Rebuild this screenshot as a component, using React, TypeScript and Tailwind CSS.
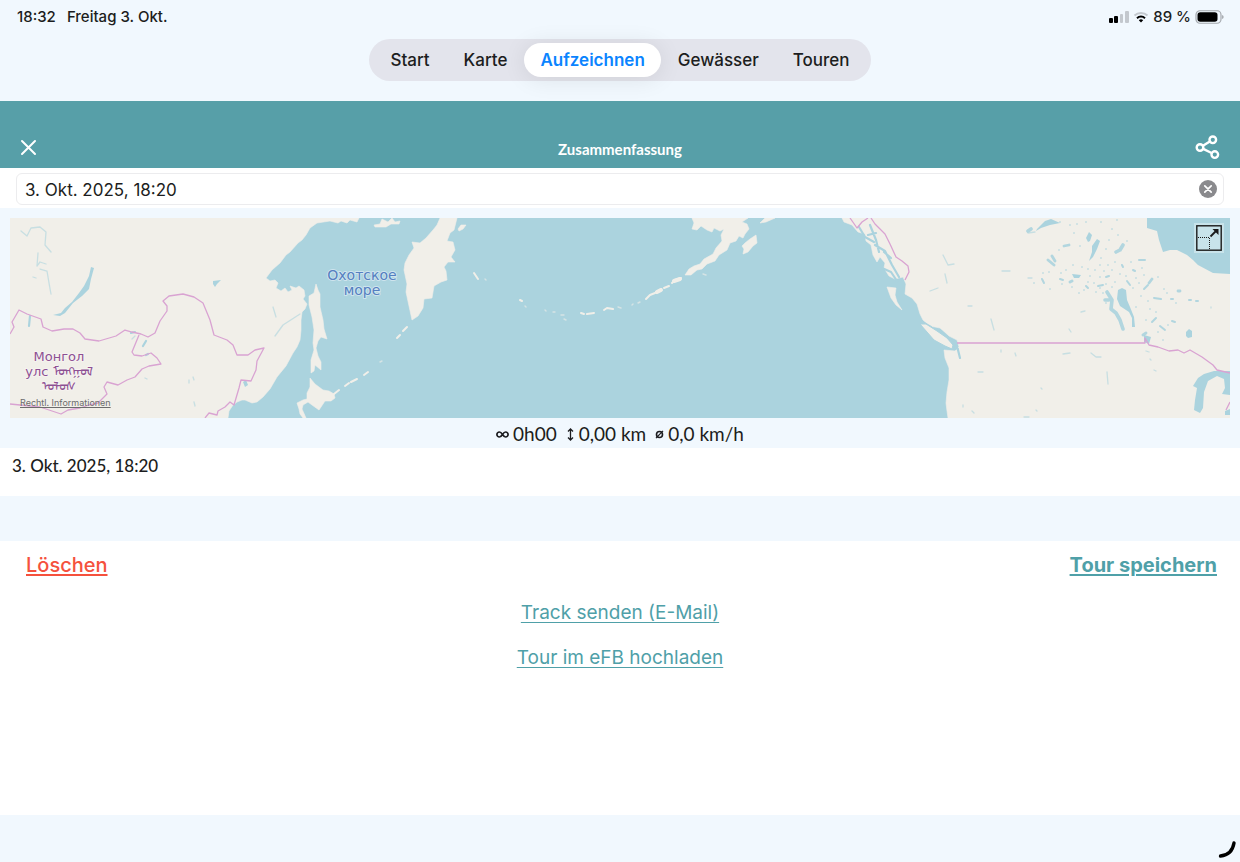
import { useState } from "react";

const TABS = ["Start", "Karte", "Aufzeichnen", "Gewässer", "Touren"];

const LAND = [
  // Siberia and Manchuria
  "M10 218H359L357 222L350 220L347 223L341 221L338 223L330 221L317 223L310 228L306 235L302 240L298 243L290 252L286 255L280 263L272 270L266 278L270 281L275 280L278 283L276 288L281 291L285 288L288 292L292 290L290 286L296 288L299 286L304 290L305 296L303 299L307 304L305 309L302 312L301 320L301 330L300 340L297 347L293 353L286 366L277 377L270 389L263 397L257 402L252 403L245 400L242 400L237 402L233 405L229 411L228 418H10Z",
  // Sakhalin
  "M316 284L318 290L320 294L320 307L323 320L324 329L327 339L321 337L318 341L316 348L318 356L321 362L321 370L315 365L314 371L311 373L311 360L314 350L313 343L314 330L312 317L309 305L309 296L314 293Z",
  // Hokkaido
  "M310 378L315 384L323 390L329 391L334 394L335 398L331 401L325 401L319 410L312 405L308 402L303 405L302 409L306 418H303L300 414L299 409L297 403L303 400L307 399L307 393L310 387Z",
  // Kamchatka
  "M440 218L437 225L433 230L426 238L420 243L412 242L414 248L409 255L405 263L404 270L407 284L406 292L409 306L412 320L418 316L423 308L424 299L432 298L434 286L441 282L447 280L446 271L444 267L448 262L455 262L451 257L455 250L453 242L447 241L450 233L454 230L457 218Z",
  "M374 225L380 224L382 219L388 222L392 218L395 222L400 221L399 224L391 224L386 227L375 227Z",
  "M458 229L461 225L466 225L463 229L459 231Z",
  // Alaska
  "M692 218L694 223L692 229L697 230L701 226L707 230L712 232L714 228L720 231L724 229L721 235L722 241L716 248L713 254L704 259L700 264L694 266L689 269L685 275L691 275L697 270L702 269L707 264L715 261L719 255L727 250L730 243L736 241L739 236L743 238L745 234L749 229L747 224L742 222L748 218Z",
  "M742 246L745 243L750 239L756 235L757 243L753 246L748 252L743 254L744 249Z",
  "M760 223L765 218H775L766 222Z",
  // North America
  "M842 218L844 222L852 225L858 232L865 234L866 241L871 245L873 255L877 262L880 257L885 263L884 268L889 276L895 279L903 277L906 284L905 294L912 298L917 304L920 314L923 320L930 326L940 328L949 336L957 340L959 347L955 351L944 350L945 358L949 368V380L947 392L946 403L947 411L948 418H1230V218Z",
  // Haida Gwaii
  "M887 287L896 288L895 295L897 302L902 310L896 305L891 298Z",
];

const ISLAND_CHAINS = [
  "M403 331L407 327M397 338L400 335M364 375L368 372M351 382L357 379M345 386L349 383M334 394L339 390M474 273L478 279",
  "M672 283L675 280L681 278M646 299L650 295L655 293M656 292L661 289M664 288L669 286M520 300L522 301M604 310L607 308L613 309M581 313L584 314M587 314L594 313",
];

const FAINT_ISLANDS =
  "M380 362L382 361M638 303L640 302M553 312H555M545 310L546 311M561 315H564M564 319L566 320M618 307L621 308M632 305L633 304M703 274L706 275M525 306L526 307M485 279L486 280";

const WATERS = [
  // Baikal
  "M91 267L94 268L91 279L89 289L82 296L73 303L65 313L60 316L53 315L61 313L65 308L72 302L79 293L84 286L89 276Z",
  // Hudson Bay
  "M1147 218V228L1157 231L1159 240L1163 252L1170 250L1177 250L1187 255L1193 260L1198 265L1213 273L1230 274V218Z",
  // Michigan, the edge of Superior and Huron
  "M1193 386L1198 378L1204 374L1214 371H1230V395L1222 394L1225 388L1224 379L1217 376L1208 381L1204 392L1203 408L1200 413L1194 410L1195 400L1197 388Z",
  "M1225 411L1230 409V415H1225Z",
  // Winnipeg
  "M1118 290L1122 288L1126 290L1127 300L1130 307L1134 317L1135 327L1132 327L1132 318L1129 312L1120 306L1117 299Z",
  "M1186 332L1189 329L1192 331V337L1188 338L1186 336Z",
  "M1089 232L1092 235L1090 241L1088 242L1086 238Z",
  "M1097 239L1100 241L1097 249L1093 257L1089 261L1092 252L1092 246Z",
  "M1037 229L1045 221L1051 219L1060 223L1050 225L1041 228L1036 231Z",
  "M1144 335L1151 337L1149 344L1144 342Z",
  "M213 281L221 280L217 284L215 287L213 284Z",
  "M246 380L248 385L245 387L243 382Z",
  "M1072 274L1081 275L1079 278H1074Z",
];

const LAKE_STROKES = [
  "M1107 292L1112 300L1111 309L1116 313L1120 320L1123 329M1105 300H1109M1116 252L1120 250L1123 245M1028 231L1031 229",
  "M1048 260L1054 265M1052 256L1055 261M1064 246L1069 245M1070 282L1072 281M1149 283L1152 279M1178 291H1180M1143 335L1146 333",
  "M1044 283L1042 279M1060 279L1063 280M1106 277L1109 276M1086 286L1088 288M1133 270L1135 271M1152 322L1156 318M1160 326L1165 330M1172 321L1175 322M1154 298L1161 299M1171 299H1173M1189 300H1191M1196 301H1198M1130 285L1127 281M1139 260H1145M1122 265L1123 267M1098 286L1103 285M1144 289L1148 285",
  "M1063 354L1070 353M1091 353L1096 357L1101 357M1107 372L1108 384M1146 351L1149 352M1154 370L1156 371M1081 312L1085 311M1069 329L1071 332M1041 388L1042 389M1150 359L1151 360M1036 410L1037 411M1211 307V308",
  "M1028 233L1035 232M1002 271L1010 271M943 255L948 265L954 264M945 274L947 283M930 291L938 288M968 306H972M1015 353L1016 356M1001 350V352M972 411L974 413M1024 417H1029M963 405V407M978 372H983M991 319L994 330M1028 278H1032",
  "M21 231L27 236L31 228L40 227L46 232L45 245L51 252M38 253L37 266L40 262L46 264M40 269L47 271L49 283L51 294M132 339L135 336M194 402L195 406M193 377L194 380M189 380V383M33 277L36 278M275 336L283 325L300 314M273 307L276 317M145 378L147 379",
];

// small lakes of the Canadian Shield, drawn as dots
const LAKE_DOTS =
  "M1060 222h0M1070 225h0M1077 224h0M1086 222h0M1101 222h0M1117 220h0M1112 229h0M1118 235h0M1074 233h0M1109 240h0M1106 249h0M1127 241h0M1080 246h0M1059 250h0M1101 258h0M1115 262h0M1131 262h0M1108 265h0M1088 269h0M1082 267h0M1073 265h0M1066 270h0M1061 273h0M1049 272h0M1043 273h0M1100 265h0M1112 270h0M1126 276h0M1142 268h0M1136 278h0M1144 275h0M1158 277h0M1139 283h0M1133 288h0M1164 289h0M1141 296h0M1148 301h0M1167 293h0M1150 309h0M1156 312h0M1103 293h0M1096 292h0M1090 276h0M1084 290h0M1079 293h0M1104 271h0M1115 282h0M1100 277h0M1176 303h0M1146 320h0M1158 332h0M1168 325h0M1136 307h0M1163 340h0M1106 303h0M1034 283h0M1050 289h0M1062 284h0M1072 287h0M1088 282h0M1094 283h0M1100 288h0M1106 284h0M1112 287h0M1120 274h0M1095 270h0";

const WIDE_LAKES =
  "M30 316L29 326M143 346L146 341M131 333L135 332M146 355L148 354M949 345L958 349M958 350L960 358M941 331L952 341M922 322L931 327M859 227L865 237L874 242M870 225L876 240L879 252M875 245L885 251L892 265L899 277M884 252L891 258M882 268L891 272L897 281M868 235L876 233";

const BORDERS = [
  "M10 334L14 327L12 322L19 310L27 314L41 319L43 327L52 331L64 329H73L80 333L85 339L99 341L116 336L125 330L132 332L141 334L148 337L155 333L160 321L167 311V306L163 301L169 296L183 294L194 297L203 303L210 320L214 335L227 340L233 345L237 355L248 355L255 350L264 348L257 361L256 370L251 381L241 380L239 388L234 405L230 402L225 407L218 411L217 415L209 413L205 418",
  "M139 335L132 352L134 355L142 356L151 353L157 358L161 364L149 366L142 369L135 377L127 380L118 385L107 382L104 387L107 394L98 403L89 405L80 408L68 410L61 414L52 411L40 407L10 404",
  "M850 218L857 228L862 222L868 218M871 218L875 224L885 234L890 244L896 257L902 261L908 266L909 272L905 280",
  "M957 343H1145V338L1149 345L1158 347L1169 351L1178 350L1184 353L1190 350L1202 357L1213 365L1217 370L1230 373M1230 402L1226 410",
];

function MapView() {
  return (
    <svg
      viewBox="10 218 1220 200"
      preserveAspectRatio="xMidYMid slice"
      className="block w-full h-[200px] bg-[#abd3de]"
      role="img"
      aria-label="Karte"
    >
      <g fill="#f1efe9" stroke="#f1efe9" strokeWidth="0.6" strokeLinejoin="round">
        {LAND.map((d) => (
          <path key={d} d={d} />
        ))}
      </g>
      <g fill="none" stroke="#f1efe9" strokeWidth="2" strokeLinecap="round" strokeLinejoin="round">
        {ISLAND_CHAINS.map((d) => (
          <path key={d} d={d} />
        ))}
        <path d={FAINT_ISLANDS} strokeWidth="1.4" opacity="0.6" />
        <path d="M674 281L680 279M657 292L661 290" strokeWidth="4" />
      </g>
      <g fill="#abd3de">
        {WATERS.map((d) => (
          <path key={d} d={d} />
        ))}
      </g>
      <g fill="none" stroke="#abd3de" strokeLinecap="round" strokeLinejoin="round">
        {LAKE_STROKES.map((d, i) => (
          <path key={d} d={d} strokeWidth={i === 0 ? 3.6 : i === 1 ? 2.8 : i === 2 ? 2 : 1.3} opacity={i < 3 ? 0.9 : 0.6} />
        ))}
        <path d={LAKE_DOTS} strokeWidth="2" opacity="0.6" />
        <path d={WIDE_LAKES} strokeWidth="2.2" />
      </g>
      {/* Vancouver Island sits on top of its strait */}
      <path d="M920 324L926 324L937 331L947 338L953 345L952 349L945 346L934 340L927 332Z" fill="#f1efe9" stroke="#abd3de" />
      <g fill="none" stroke="#d9a3d2" strokeWidth="1.3" strokeLinejoin="round">
        {BORDERS.map((d) => (
          <path key={d} d={d} />
        ))}
      </g>
      <g
        fontFamily="'DejaVu Sans', sans-serif"
        textAnchor="middle"
        strokeWidth="2"
        strokeLinejoin="round"
        paintOrder="stroke"
      >
        <g fill="#547fc0" stroke="#cfe4ee" fontSize="14">
          <text x="362" y="280">Охотское</text>
          <text x="362" y="295">море</text>
        </g>
        <g fill="#8d5093" stroke="#f6f3f0" fontSize="13">
          <text x="59" y="361">Монгол</text>
          <text x="59" y="376">улс ᠮᠣᠩᠭᠣᠯ</text>
          <text x="59" y="391">ᠤᠯᠤᠰ</text>
        </g>
      </g>
    </svg>
  );
}

function StatusBar() {
  return (
    <div className="flex items-center justify-between pl-[17px] pr-4 pt-[7px] text-[15px] leading-5 font-medium">
      <div className="flex gap-[11px]">
        <span>18:32</span>
        <span>Freitag 3. Okt.</span>
      </div>
      <div className="flex items-center gap-1">
        <svg width="20" height="12" viewBox="0 0 20 12" aria-hidden>
          <rect x="0" y="7" width="4" height="5" rx="1" />
          <rect x="5" y="5" width="4" height="7" rx="1" />
          <rect x="11" y="3" width="3" height="9" rx="1" fill="#c3c8ce" />
          <rect x="16" y="0" width="4" height="12" rx="1" fill="#c3c8ce" />
        </svg>
        <svg width="16" height="12" viewBox="0 0 16 12" fill="none" strokeWidth="2" aria-hidden>
          <path d="M1.5 4.5a9.5 9.5 0 0 1 13 0" stroke="#c3c8ce" />
          <path d="M4 7.2a5.8 5.8 0 0 1 8 0" stroke="#000" />
          <path d="M8 11.5 5.8 9.3a3.2 3.2 0 0 1 4.4 0Z" fill="#000" />
        </svg>
        <span>89 %</span>
        <svg width="29" height="14" viewBox="0 0 29 14" aria-hidden>
          <rect x="1" y="0.75" width="25" height="12.5" rx="4" fill="none" stroke="#a4a8ad" strokeWidth="1.2" />
          <rect x="2.5" y="2.2" width="20" height="9.6" rx="2.8" />
          <path d="M27.3 5v4c1.6-.6 1.6-3.4 0-4Z" fill="#8a8d91" />
        </svg>
      </div>
    </div>
  );
}

export default function App() {
  const [tab, setTab] = useState("Aufzeichnen");
  const [title, setTitle] = useState("3. Okt. 2025, 18:20");

  return (
    <div className="relative min-h-screen flex flex-col bg-[#f1f8fe] text-[#1c1d20] font-['Inter','Liberation_Sans',sans-serif]">
      <div className="h-[101px] overflow-hidden">
        <StatusBar />
        <nav className="mx-auto mt-3 flex w-fit h-[42px] items-center rounded-full bg-[#e3e4ec] px-1">
          {TABS.map((t) => (
            <button
              key={t}
              onClick={() => setTab(t)}
              aria-current={t === tab ? "page" : undefined}
              className={
                t === tab
                  ? "h-[34px] px-4 pt-[2px] rounded-full bg-white text-[17px] font-semibold text-[#0a84ff] shadow-[0_2px_24px_rgba(0,0,0,0.09)]"
                  : "h-[34px] px-[17px] pt-[2px] rounded-full text-[17px] font-medium"
              }
            >
              {t}
            </button>
          ))}
        </nav>
      </div>

      <header className="flex h-[67px] items-end justify-between bg-[#579fa8] px-5 pb-[7px] text-white">
        <button aria-label="Schließen" className="flex w-[26px] h-7 items-center">
          <svg width="17" height="17" viewBox="0 0 17 17" stroke="currentColor" strokeWidth="2" strokeLinecap="round" aria-hidden>
            <path d="M2 2 15 15M15 2 2 15" />
          </svg>
        </button>
        <h1 className="text-[15px] leading-6 font-bold font-['Lato',sans-serif]">Zusammenfassung</h1>
        <button aria-label="Teilen" className="flex w-[26px] h-7 items-center justify-end">
          <svg width="25" height="25" viewBox="0 0 25 25" fill="none" stroke="currentColor" strokeWidth="2.4" aria-hidden>
            <circle cx="5" cy="12.5" r="3.3" />
            <circle cx="17.8" cy="4.8" r="3.3" />
            <circle cx="19.8" cy="19.6" r="3.3" />
            <path d="M8 10.8 14.8 6.6M8.2 13.9 16.6 18" />
          </svg>
        </button>
      </header>

      <div className="bg-white px-4 pt-[5px] pb-[3px]">
        <div className="flex h-8 items-center rounded-md border border-[#ececee] bg-white pl-2 pr-[6px]">
          <input
            aria-label="Titel"
            value={title}
            onChange={(e) => setTitle(e.target.value)}
            className="flex-1 min-w-0 bg-transparent pt-[2px] text-[17px] leading-6 outline-none"
          />
          <button aria-label="Text löschen" onClick={() => setTitle("")}>
            <svg width="18" height="18" viewBox="0 0 18 18" aria-hidden>
              <circle cx="9" cy="9" r="9" fill="#8a8a8d" />
              <path d="M5.8 5.8 12.2 12.2M12.2 5.8 5.8 12.2" stroke="#fff" strokeWidth="1.7" strokeLinecap="round" />
            </svg>
          </button>
        </div>
      </div>

      <div className="relative mx-[10px] mt-[10px]">
        <MapView />
        <a
          href="#rechtliches"
          className="absolute left-[10px] bottom-[9px] text-[9px] leading-3 text-[#6c6c6c] underline"
        >
          Rechtl. Informationen
        </a>
        <button aria-label="Karte vergrößern" className="absolute right-[6px] top-[5px] bg-[#c8e3ea] p-[2px]">
          <svg width="26" height="26" viewBox="0 0 26 26" fill="none" stroke="#1b1b1b" aria-hidden>
            <rect x="0.8" y="0.8" width="24.4" height="24.4" strokeWidth="1.4" />
            <path d="M2 12.5H13.5V25" strokeWidth="1" strokeDasharray="1 1" />
            <path d="M14.5 11.5 20 6" strokeWidth="1.8" />
            <path d="M16.5 4H22.5V10Z" fill="#1b1b1b" stroke="none" />
          </svg>
        </button>
      </div>

      <div className="flex h-[30px] items-center justify-center gap-[9px] pt-[2px] text-[19px] leading-6 font-['Lato',sans-serif]">
        <span className="flex items-center gap-1">
          <svg width="13" height="9" viewBox="0 0 13 9" fill="none" stroke="currentColor" strokeWidth="1.7" aria-hidden>
            <path d="M6.5 4.5C5.4 2.8 4.6 2 3.4 2a2.5 2.5 0 0 0 0 5C4.6 7 5.4 6.2 6.5 4.5C7.6 2.8 8.4 2 9.6 2a2.5 2.5 0 0 1 0 5C8.4 7 7.6 6.2 6.5 4.5Z" />
          </svg>
          0h00
        </span>
        <span className="flex items-center gap-1">
          <svg width="9" height="13" viewBox="0 0 9 13" fill="none" stroke="currentColor" strokeWidth="1.3" aria-hidden>
            <path d="M4.5 1V12M2 3.5 4.5 1 7 3.5M2 9.5 4.5 12 7 9.5" />
          </svg>
          0,00 km
        </span>
        <span className="flex items-center gap-1">
          <svg width="9" height="10" viewBox="0 0 9 10" fill="none" stroke="currentColor" strokeWidth="1.6" aria-hidden>
            <circle cx="4.5" cy="5.5" r="3" />
            <path d="M1 9.2 8 1.8" strokeWidth="1.2" />
          </svg>
          0,0 km/h
        </span>
      </div>

      <p className="h-12 bg-white px-3 pt-[6px] text-[17px] leading-6 font-medium font-['Lato',sans-serif]">
        3. Okt. 2025, 18:20
      </p>

      <main className="mt-[45px] flex-1 bg-white">
        <div className="flex items-start justify-between pl-[26px] pr-[23px] pt-[10px] text-[20px] leading-7 underline-offset-2">
          <button className="font-medium text-[#f5513d] underline">Löschen</button>
          <button className="font-bold text-[#4fa0a8] underline">Tour speichern</button>
        </div>
        <div className="mt-5 flex flex-col items-center gap-[17px] text-[19px] leading-7 text-[#4fa0a8]">
          <a href="#mail" className="underline underline-offset-3">Track senden (E-Mail)</a>
          <a href="#efb" className="underline underline-offset-3">Tour im eFB hochladen</a>
        </div>
      </main>

      <footer className="h-[47px]" />

      <svg
        className="absolute right-0 bottom-0"
        width="24"
        height="24"
        viewBox="0 0 24 24"
        fill="none"
        stroke="#000"
        strokeWidth="3.4"
        strokeLinecap="round"
        aria-hidden
      >
        <path d="M4.5 18Q16 17 18 5" />
      </svg>
    </div>
  );
}
